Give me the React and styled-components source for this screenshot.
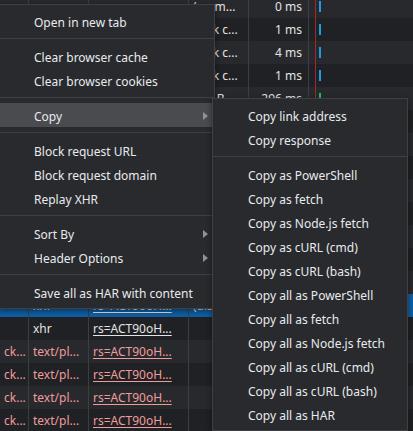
import React from "react";
import styled, { createGlobalStyle } from "styled-components";

const GlobalStyle = createGlobalStyle`
  html, body {
    margin: 0;
    padding: 0;
    background: #202124;
    overflow: hidden;
  }
  body {
    font-family: "Noto Sans", "Liberation Sans", sans-serif;
    font-size: 12px;
  }
`;

const Page = styled.div`
  position: relative;
  width: 413px;
  height: 431px;
  overflow: hidden;
  background: #202124;
`;

const Table = styled.div`
  margin-top: -5px;
  display: flex;
  flex-direction: column;
`;

const Row = styled.div`
  display: grid;
  grid-template-columns: 29px 60px 100px 60px 60px 1fr;
  height: 23px;
  background: ${(p) => (p.$selected ? "#0f5fa6" : p.$alt ? "#28292c" : "#202124")};
`;

const Cell = styled.div`
  box-sizing: border-box;
  border-right: 1px solid #3d3e41;
  padding: ${(p) => (p.$right ? "0 6px 0 4px" : "0 4px")};
  line-height: 23px;
  white-space: nowrap;
  overflow: hidden;
  text-align: ${(p) => (p.$right ? "right" : "left")};
  color: ${(p) => (p.$error ? "#ee9c9c" : "#e3e3e3")};
  text-decoration: ${(p) => (p.$link ? "underline" : "none")};
  text-underline-offset: 2px;
`;

const Waterfall = styled.div`
  position: relative;
  display: flex;
  align-items: center;
  padding-left: 10px;

  &::before {
    content: "";
    position: absolute;
    left: 6px;
    top: 0;
    bottom: 0;
    width: 1px;
    background: #9b2a2a;
  }
`;

const Bar = styled.div`
  width: 2px;
  height: 11px;
  background: ${(p) => (p.$color === "green" ? "#1fbd6a" : "#1e9ce8")};
`;

const Menu = styled.div`
  position: absolute;
  box-sizing: border-box;
  left: ${(p) => p.$left}px;
  top: ${(p) => p.$top}px;
  width: ${(p) => p.$width}px;
  padding: 4px 0;
  background: #292a2d;
  border: 1px solid #3f4044;
  box-shadow: 0 2px 6px rgba(0, 0, 0, 0.45);
  color: #e8eaed;
`;

const Item = styled.div`
  display: flex;
  align-items: center;
  height: 24px;
  padding-left: 35px;
  padding-top: 2px;
  box-sizing: border-box;
  white-space: nowrap;
  background: ${(p) => (p.$active ? "#4a4b4f" : "transparent")};
`;

const Arrow = styled.span`
  margin-left: auto;
  margin-right: 6px;
  width: 0;
  height: 0;
  border-left: 5px solid #909296;
  border-top: 4px solid transparent;
  border-bottom: 4px solid transparent;
`;

const Separator = styled.div`
  height: 1px;
  margin: 5px 0;
  background: #3f4044;
`;

const link = "rs=ACT90oH...";

// rows 5-12 sit fully behind the context menus, so they carry no text
const rows = [
  { c4: "(mem...", c5: "0 ms", bar: "blue" },
  { c4: "(disk c...", c5: "1 ms", bar: "blue" },
  { c4: "(disk c...", c5: "4 ms", bar: "blue" },
  { c4: "(disk c...", c5: "1 ms", bar: "blue" },
  { c4: "147 B", c5: "296 ms", bar: "green" },
  {},
  {},
  {},
  {},
  {},
  {},
  {},
  {},
  { c2: "xhr", c3: link, c4: "(disk c...", selected: true },
  { c2: "xhr", c3: link },
  { c1: "ck...", c2: "text/pl...", c3: link, error: true },
  { c1: "ck...", c2: "text/pl...", c3: link, error: true },
  { c1: "ck...", c2: "text/pl...", c3: link, error: true },
  { c1: "ck...", c2: "text/pl...", c3: link, error: true },
];

const mainMenu = [
  ["Open in new tab"],
  ["Clear browser cache", "Clear browser cookies"],
  [{ label: "Copy", sub: true, active: true }],
  ["Block request URL", "Block request domain", "Replay XHR"],
  [{ label: "Sort By", sub: true }, { label: "Header Options", sub: true }],
  ["Save all as HAR with content"],
];

const copyMenu = [
  ["Copy link address", "Copy response"],
  [
    "Copy as PowerShell",
    "Copy as fetch",
    "Copy as Node.js fetch",
    "Copy as cURL (cmd)",
    "Copy as cURL (bash)",
    "Copy all as PowerShell",
    "Copy all as fetch",
    "Copy all as Node.js fetch",
    "Copy all as cURL (cmd)",
    "Copy all as cURL (bash)",
    "Copy all as HAR",
  ],
];

const MenuGroups = ({ groups }) =>
  groups.map((group, gi) => (
    <React.Fragment key={gi}>
      {gi > 0 && <Separator />}
      {group.map((entry) => {
        const item = typeof entry === "string" ? { label: entry } : entry;
        return (
          <Item key={item.label} $active={item.active}>
            {item.label}
            {item.sub && <Arrow />}
          </Item>
        );
      })}
    </React.Fragment>
  ));

export default function App() {
  return (
    <Page>
      <GlobalStyle />
      <Table>
        {rows.map((r, i) => (
          <Row key={i} $selected={r.selected} $alt={i < 13 ? i % 2 === 0 : i % 2 === 1}>
            <Cell $error={r.error}>{r.c1}</Cell>
            <Cell $error={r.error}>{r.c2}</Cell>
            <Cell $error={r.error} $link={!!r.c3}>{r.c3}</Cell>
            <Cell $error={r.error}>{r.c4}</Cell>
            <Cell $right>{r.c5}</Cell>
            <Waterfall>{r.bar && <Bar $color={r.bar} />}</Waterfall>
          </Row>
        ))}
      </Table>

      <Menu $left={-2} $top={4} $width={217}>
        <MenuGroups groups={mainMenu} />
      </Menu>

      <Menu $left={212} $top={98} $width={196}>
        <MenuGroups groups={copyMenu} />
      </Menu>
    </Page>
  );
}
